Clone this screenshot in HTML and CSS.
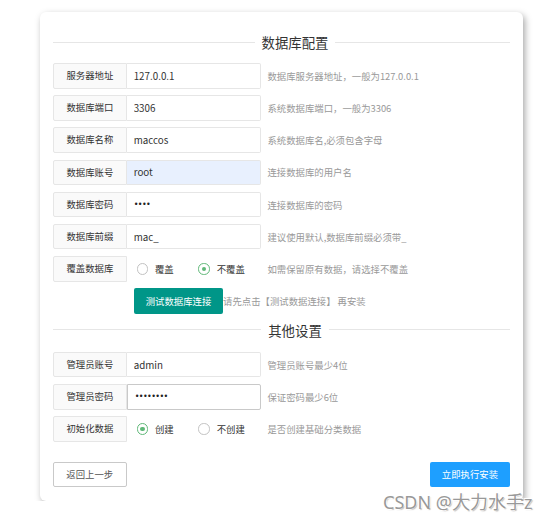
FILE: index.html
```html
<!DOCTYPE html>
<html lang="zh-CN">
<head>
  <meta charset="UTF-8">
  <meta name="viewport" content="width=device-width, initial-scale=1.0">
  <title>安装向导 - 数据库配置</title>
  <link rel="stylesheet" href="styles.css">
</head>
<body>
  <div class="card">
    <div class="legend">
      <span class="line line-left"></span>
      <span class="legend-title">数据库配置</span>
      <span class="line line-right"></span>
    </div>

    <div class="form-item">
      <label class="form-label">服务器地址</label>
      <input class="input" type="text" value="127.0.0.1">
      <div class="word-aux">数据库服务器地址，一般为127.0.0.1</div>
    </div>
    <div class="form-item">
      <label class="form-label">数据库端口</label>
      <input class="input" type="text" value="3306">
      <div class="word-aux">系统数据库端口，一般为3306</div>
    </div>
    <div class="form-item">
      <label class="form-label">数据库名称</label>
      <input class="input" type="text" value="maccos">
      <div class="word-aux">系统数据库名,必须包含字母</div>
    </div>
    <div class="form-item">
      <label class="form-label">数据库账号</label>
      <input class="input input-autofill" type="text" value="root">
      <div class="word-aux">连接数据库的用户名</div>
    </div>
    <div class="form-item">
      <label class="form-label">数据库密码</label>
      <input class="input input-pass" type="password" value="root">
      <div class="word-aux">连接数据库的密码</div>
    </div>
    <div class="form-item">
      <label class="form-label">数据库前缀</label>
      <input class="input" type="text" value="mac_">
      <div class="word-aux">建议使用默认,数据库前缀必须带_</div>
    </div>
    <div class="form-item">
      <label class="form-label">覆盖数据库</label>
      <div class="radio-box">
        <span class="radio"><i class="radio-icon"></i>覆盖</span>
        <span class="radio"><i class="radio-icon checked"></i>不覆盖</span>
      </div>
      <div class="word-aux">如需保留原有数据，请选择不覆盖</div>
    </div>
    <div class="form-item test-row">
      <button class="btn btn-teal" type="button">测试数据库连接</button>
      <span class="test-tip">请先点击【测试数据连接】 再安装</span>
    </div>

    <div class="legend legend-2">
      <span class="line line-left"></span>
      <span class="legend-title">其他设置</span>
      <span class="line line-right"></span>
    </div>

    <div class="form-item">
      <label class="form-label">管理员账号</label>
      <input class="input" type="text" value="admin">
      <div class="word-aux">管理员账号最少4位</div>
    </div>
    <div class="form-item">
      <label class="form-label">管理员密码</label>
      <input class="input input-pass input-hover" type="password" value="12345678">
      <div class="word-aux">保证密码最少6位</div>
    </div>
    <div class="form-item">
      <label class="form-label">初始化数据</label>
      <div class="radio-box">
        <span class="radio"><i class="radio-icon checked"></i>创建</span>
        <span class="radio"><i class="radio-icon"></i>不创建</span>
      </div>
      <div class="word-aux">是否创建基础分类数据</div>
    </div>

    <div class="footer">
      <button class="btn btn-plain" type="button">返回上一步</button>
      <button class="btn btn-blue" type="button">立即执行安装</button>
    </div>
  </div>

  <div class="watermark">CSDN @大力水手z</div>
</body>
</html>
```

FILE: styles.css
```css
body {
  margin: 0;
  background: #fff;
  font-family: "Noto Sans CJK SC", "Noto Sans", sans-serif;
  color: #333;
}
.card {
  width: 483px;
  height: 489px;
  box-sizing: border-box;
  margin: 12px 0 0 40px;
  padding: 20px 13px 14px;
  background: #fff;
  border-radius: 6px;
  box-shadow: 2px 3px 7px rgba(0, 0, 0, 0.35);
  display: flex;
  flex-direction: column;
}
.legend {
  display: flex;
  align-items: center;
  gap: 7px;
  height: 20px;
  margin-bottom: 11px;
}
.legend-2 {
  margin-top: 6px;
  margin-bottom: 12px;
}
.line {
  height: 1px;
  background: #e6e6e6;
}
/* 제목이 가운데보다 조금 오른쪽에 있어서 왼쪽 선에 기본 길이를 더 준다 */
.line-left {
  flex: 1 1 27px;
}
.line-right {
  flex: 1 1 0;
}
.legend-title {
  font-size: 13.4px;
  line-height: 20px;
  color: #333;
}
.form-item {
  display: flex;
  align-items: center;
  height: 25.5px;
  margin-bottom: 6.7px;
}
.form-label {
  flex-shrink: 0;
  width: 73.7px;
  height: 100%;
  box-sizing: border-box;
  border: 1px solid #e6e6e6;
  border-radius: 2px 0 0 2px;
  background: #fafafa;
  font-size: 9.4px;
  line-height: 23.5px;
  text-align: center;
  color: #333;
}
.input {
  flex-shrink: 0;
  width: 134px;
  height: 100%;
  box-sizing: border-box;
  margin: 0;
  border: 1px solid #e6e6e6;
  border-left: none;
  border-radius: 0 2px 2px 0;
  padding: 0 7px;
  font-family: "Noto Sans CJK SC", "Noto Sans", sans-serif;
  font-size: 9.8px;
  color: #333;
  background: #fff;
  outline: none;
}
.input-pass {
  font-family: "DejaVu Sans", sans-serif;
  font-size: 8px;
  letter-spacing: -0.6px;
  color: #222;
}
.input-autofill {
  background: #e8f0fe;
}
.input-hover {
  border-color: #c9c9c9;
  border-left: 1px solid #c9c9c9;
}
.word-aux {
  margin-left: 6.7px;
  font-size: 9.4px;
  color: #999;
  white-space: nowrap;
}
.radio-box {
  flex-shrink: 0;
  width: 134px;
  display: flex;
  align-items: center;
  padding-left: 10px;
  box-sizing: border-box;
}
.radio {
  display: flex;
  align-items: center;
  white-space: nowrap;
  font-size: 9.4px;
  color: #333;
  margin-right: 24.6px;
}
.radio-icon {
  flex-shrink: 0;
  width: 11.3px;
  height: 11.3px;
  box-sizing: border-box;
  border: 1px solid #c2c2c2;
  border-radius: 50%;
  margin-right: 7px;
  display: flex;
  align-items: center;
  justify-content: center;
}
.radio-icon.checked {
  border-color: #5fb878;
}
.radio-icon.checked::after {
  content: "";
  width: 4.6px;
  height: 4.6px;
  border-radius: 50%;
  background: #5fb878;
}
.test-row {
  padding-left: 81px;
  margin-bottom: 0;
}
.btn {
  height: 25.5px;
  border: none;
  border-radius: 2px;
  padding: 0;
  font-family: "Noto Sans CJK SC", sans-serif;
  font-size: 9.4px;
  cursor: pointer;
}
.btn-teal {
  flex-shrink: 0;
  width: 89px;
  background: #009688;
  color: #fff;
}
.test-tip {
  font-size: 9.4px;
  color: #999;
  white-space: nowrap;
}
.footer {
  margin-top: auto;
  display: flex;
  justify-content: space-between;
}
.btn-plain {
  width: 73.5px;
  background: #fff;
  border: 1px solid #c9c9c9;
  color: #555;
}
.btn-blue {
  width: 80px;
  background: #1e9fff;
  color: #fff;
}
.watermark {
  position: absolute;
  left: 383px;
  top: 489px;
  font-family: "Noto Sans", "Noto Sans CJK SC", sans-serif;
  font-size: 18px;
  line-height: 26px;
  color: #999;
  white-space: nowrap;
  text-shadow: -1px -1px 0 #fff, 1px -1px 0 #fff, -1px 1px 0 #fff, 1px 1px 1px rgba(0, 0, 0, 0.25);
}
```
